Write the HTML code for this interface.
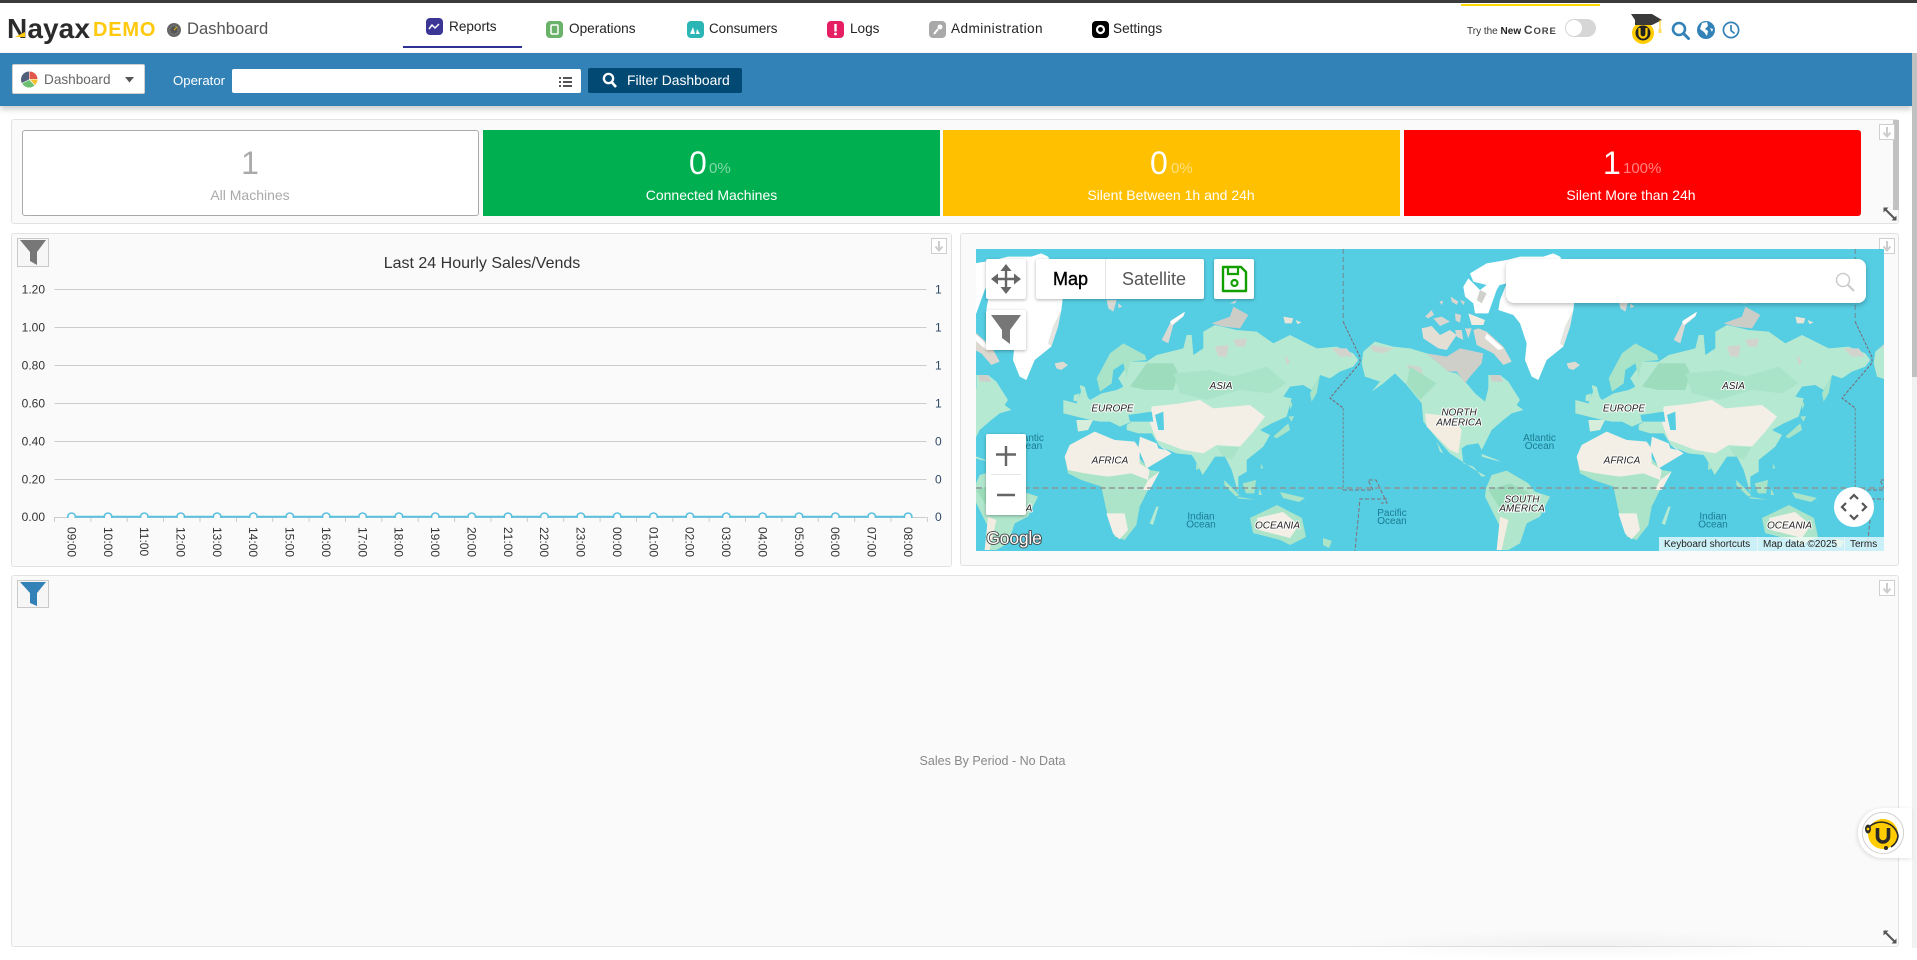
<!DOCTYPE html>
<html lang="en"><head><meta charset="utf-8"><title>Dashboard</title>
<style>
*{box-sizing:border-box}
html,body{margin:0;padding:0;width:1917px;height:948px;overflow:hidden;background:#fff;font-family:"Liberation Sans",sans-serif}
.a{position:absolute}
.t{position:absolute;white-space:nowrap;line-height:1}
.c{transform:translateX(-50%)}
.nav{font-size:13.6px;color:#222}
.panel{position:absolute;background:#fafafa;border:1px solid #e2e2e2;border-radius:3px}
.card{position:absolute;top:130px;height:86px}
.num{font-size:32px;line-height:1;top:147px;position:absolute;white-space:nowrap}
.pc{font-size:15px;line-height:1;top:161px;position:absolute;white-space:nowrap;opacity:.5}
.lab{font-size:14px;line-height:1;top:188px;position:absolute;white-space:nowrap;transform:translateX(-50%)}
.dl{position:absolute;width:16px;height:16px;background:#fff;border:1px solid #cfcfcf}
.ctl{position:absolute;background:#fff;border-radius:2px;box-shadow:0 1px 3px rgba(0,0,0,.3)}
svg{display:block;position:absolute;overflow:hidden}
</style></head><body>

<div class="a" style="left:0;top:0;width:1917px;height:3px;background:#3b3b3b"></div>
<div class="a" style="left:1461px;top:4px;width:139px;height:2px;background:#ffd800"></div>

<!-- logo -->
<div class="t" style="left:7px;top:15px;font-size:28px;font-weight:bold;color:#2b2b2b;letter-spacing:.1px">Nayax</div>
<div class="t" style="left:93px;top:20px;font-size:20px;font-weight:bold;color:#ffc90e;letter-spacing:.8px">DEMO</div>
<svg style="left:10px;top:30px" width="18" height="8"><polygon points="5,7 15,2 15,7" fill="#ffc90e"/></svg>
<svg style="left:166px;top:22px" width="16" height="16" viewBox="0 0 16 16"><circle cx="8" cy="8" r="7" fill="#666"/><circle cx="8" cy="8" r="4" fill="#555" stroke="#888" stroke-width="1" stroke-dasharray="1 1"/><path d="M8 8L11 5" stroke="#e5b400" stroke-width="1"/></svg>
<div class="t" style="left:187px;top:21px;font-size:16.6px;color:#555">Dashboard</div>

<!-- nav -->
<svg style="left:426px;top:18px" width="17" height="17" viewBox="0 0 17 17"><rect width="17" height="17" rx="4" fill="#3b3696"/><path d="M3 11L6 7L9 10L13 6" stroke="#fff" stroke-width="1.5" fill="none"/></svg>
<div class="t nav" style="left:449px;top:20px">Reports</div>
<div class="a" style="left:403px;top:46px;width:119px;height:2px;background:#2e3192"></div>

<svg style="left:546px;top:21px" width="17" height="17" viewBox="0 0 17 17"><rect width="17" height="17" rx="4" fill="#6ab26a"/><rect x="5" y="4" width="7" height="9" rx="1" fill="none" stroke="#fff" stroke-width="1.5"/></svg>
<div class="t nav" style="left:569px;top:22px">Operations</div>

<svg style="left:687px;top:21px" width="17" height="17" viewBox="0 0 17 17"><rect width="17" height="17" rx="4" fill="#2bb5b5"/><path d="M3 13L6 6L8 13ZM9 13L10 8L13 13Z" fill="#fff"/></svg>
<div class="t nav" style="left:709px;top:22px;font-size:13.4px">Consumers</div>

<svg style="left:827px;top:21px" width="17" height="17" viewBox="0 0 17 17"><rect width="17" height="17" rx="4" fill="#e61e64"/><rect x="7.3" y="3" width="2.4" height="7.5" fill="#fff"/><circle cx="8.5" cy="13" r="1.4" fill="#fff"/></svg>
<div class="t nav" style="left:850px;top:22px">Logs</div>

<svg style="left:929px;top:21px" width="17" height="17" viewBox="0 0 17 17"><rect width="17" height="17" rx="4" fill="#a9a9a9"/><path d="M5 13L9 8" stroke="#fff" stroke-width="2"/><circle cx="11" cy="6" r="2.5" fill="#fff"/></svg>
<div class="t nav" style="left:951px;top:22px;letter-spacing:.42px">Administration</div>

<svg style="left:1092px;top:21px" width="17" height="17" viewBox="0 0 17 17"><rect width="17" height="17" rx="4" fill="#000"/><circle cx="8.5" cy="8.5" r="3.5" fill="none" stroke="#fff" stroke-width="2.2"/></svg>
<div class="t nav" style="left:1113px;top:22px">Settings</div>

<div class="t" style="left:1467px;top:24px;font-size:10px;color:#333">Try the <b style="color:#222">New</b> <b style="color:#444;font-size:12px;letter-spacing:.9px">C<span style="font-size:9.5px">ORE</span></b></div>
<div class="a" style="left:1565px;top:19px;width:31px;height:18px;background:#d6d6d6;border-radius:9px"></div>
<div class="a" style="left:1566px;top:20px;width:16px;height:16px;background:#fff;border-radius:50%"></div>

<!-- cap -->
<svg style="left:1628px;top:12px" width="38" height="34" viewBox="0 0 38 34"><circle cx="15" cy="21" r="11" fill="#ffcc00"/><circle cx="15" cy="21" r="7.5" fill="#222"/><path d="M11.5 16v6a3.5 3.5 0 007 0v-6" fill="none" stroke="#ffcc00" stroke-width="2.2"/><path d="M3 2L24 2L34 8L24 13H7L7 8Z" fill="#3a3a3a"/><path d="M32 8V19" stroke="#ffcc00" stroke-width="1"/><rect x="30.5" y="17" width="3" height="4" fill="#ffdf60"/></svg>
<svg style="left:1671px;top:21px" width="19" height="19" viewBox="0 0 19 19"><circle cx="8" cy="8" r="6" fill="none" stroke="#3282b8" stroke-width="2.6"/><path d="M12.5 12.5L17.5 17.5" stroke="#3282b8" stroke-width="3" stroke-linecap="round"/></svg>
<svg style="left:1696px;top:20px" width="20" height="20" viewBox="0 0 20 20"><circle cx="10" cy="10" r="9" fill="#3282b8"/><path d="M6 3L11 2L12 6L9 9L12 11L11 16L8 12L4 9Z" fill="#fff"/><path d="M14 8l3 1-1 3z" fill="#fff"/></svg>
<svg style="left:1722px;top:21px" width="18" height="18" viewBox="0 0 18 18"><circle cx="9" cy="9" r="7.6" fill="#fff" stroke="#3282b8" stroke-width="1.7"/><path d="M9 4V9.5L12.5 12.5" fill="none" stroke="#3282b8" stroke-width="1.7"/></svg>

<!-- blue bar -->
<div class="a" style="left:0;top:53px;width:1912px;height:53px;background:#3282b8;box-shadow:0 3px 6px rgba(0,0,0,.22)"></div>
<div class="a" style="left:12px;top:64px;width:133px;height:30px;background:#fff;border:1px solid #d0d0d0;border-radius:2px"></div>
<svg style="left:21px;top:71px" width="17" height="17" viewBox="0 0 17 17"><path d="M8 8.5V0.5A8 8 0 000.8 12Z" fill="#51607a"/><path d="M8.5 8V0.5A8 8 0 0116.5 8Z" fill="#e2574c"/><path d="M9 8.5H16.5A8 8 0 0114 14Z" fill="#f3c02f"/><path d="M8.3 9L13.5 14.5A8 8 0 011.2 12.5Z" fill="#6cc070"/></svg>
<div class="t" style="left:44px;top:73px;font-size:13.6px;color:#666">Dashboard</div>
<svg style="left:125px;top:77px" width="9" height="6"><polygon points="0,0 9,0 4.5,5.5" fill="#555"/></svg>
<div class="t" style="left:173px;top:74px;font-size:13.2px;color:#fff">Operator</div>
<div class="a" style="left:232px;top:69px;width:349px;height:24px;background:#fff;border-radius:2px"></div>
<svg style="left:559px;top:76px" width="13" height="12" viewBox="0 0 13 12"><g fill="#555"><rect x="0" y="1" width="2" height="2"/><rect x="4" y="1" width="9" height="2"/><rect x="0" y="5" width="2" height="2"/><rect x="4" y="5" width="9" height="2"/><rect x="0" y="9" width="2" height="2"/><rect x="4" y="9" width="9" height="2"/></g></svg>
<div class="a" style="left:588px;top:68px;width:154px;height:25px;background:#024a73;border-radius:2px"></div>
<svg style="left:602px;top:72px" width="15" height="16" viewBox="0 0 15 16"><circle cx="6.5" cy="6.5" r="4.6" fill="none" stroke="#fff" stroke-width="2.3"/><path d="M10 10.5L14 15" stroke="#fff" stroke-width="2.6"/></svg>
<div class="t" style="left:627px;top:74px;font-size:13.9px;color:#fff">Filter Dashboard</div>

<!-- page scrollbar -->
<div class="a" style="left:1912px;top:53px;width:5px;height:895px;background:#f1f1f1"></div>
<div class="a" style="left:1912px;top:53px;width:5px;height:324px;background:#c1c1c1"></div>

<!-- panel 1 -->
<div class="panel" style="left:11px;top:119px;width:1888px;height:105px"></div>
<div class="card" style="left:22px;width:457px;background:#fff;border:1px solid #aaa;border-radius:3px"></div>
<div class="card" style="left:483px;width:457px;background:#00b050"></div>
<div class="card" style="left:943px;width:457px;background:#ffc000"></div>
<div class="card" style="left:1404px;width:457px;background:#f00;border-radius:0 3px 3px 0"></div>
<div class="num c" style="left:250px;color:#aaa">1</div>
<div class="lab" style="left:250px;color:#aaa">All Machines</div>
<div class="num" style="left:689px;color:#fff">0</div><div class="pc" style="left:709px;color:#fff">0%</div>
<div class="lab" style="left:711.5px;color:#fff">Connected Machines</div>
<div class="num" style="left:1150px;color:#fff">0</div><div class="pc" style="left:1171px;color:#fff">0%</div>
<div class="lab" style="left:1171px;color:#fff">Silent Between 1h and 24h</div>
<div class="num" style="left:1603px;color:#fff">1</div><div class="pc" style="left:1623px;color:#fff">100%</div>
<div class="lab" style="left:1631px;color:#fff">Silent More than 24h</div>
<div class="a" style="left:1893px;top:120px;width:6px;height:90px;background:#c1c1c1"></div>
<div class="dl" style="left:1879px;top:124px"></div>
<svg style="left:1879px;top:124px" width="16" height="16" viewBox="0 0 16 16"><path d="M8 3V12M4.5 8.5L8 12.5L11.5 8.5" fill="none" stroke="#ccc" stroke-width="2"/></svg>
<svg style="left:1883px;top:207px" width="14" height="14" viewBox="0 0 14 14"><path d="M2 2L12 12" stroke="#555" stroke-width="2"/><path d="M0.5 0.5H5.5L0.5 5.5ZM13.5 13.5H8.5L13.5 8.5Z" fill="#555"/></svg>

<!-- panel 2 chart -->
<div class="panel" style="left:11px;top:233px;width:941px;height:334px"></div>
<div class="a" style="left:17px;top:238px;width:32px;height:29px;background:#f6f6f6;border:1px solid #c9c9c9"></div>
<svg style="left:17px;top:238px" width="32" height="29" viewBox="0 0 32 29"><path d="M3 2H29L20 14V27L13 23V14Z" fill="#777"/></svg>
<div class="dl" style="left:931px;top:238px"></div>
<svg style="left:931px;top:238px" width="16" height="16" viewBox="0 0 16 16"><path d="M8 3V12M4.5 8.5L8 12.5L11.5 8.5" fill="none" stroke="#ccc" stroke-width="2"/></svg>
<svg style="left:0;top:240px" width="960" height="330" viewBox="0 240 960 330" font-family="'Liberation Sans',sans-serif" font-size="12" fill="#333">
<text x="482" y="268" font-size="16" text-anchor="middle" fill="#333">Last 24 Hourly Sales/Vends</text>
<g stroke="#ccc" stroke-width="1"><path d="M54.5 289.5H926.5M54.5 327.5H926.5M54.5 365.5H926.5M54.5 403.5H926.5M54.5 441.5H926.5M54.5 479.5H926.5M54.5 517.5H926.5"/>
<path d="M54.5 517V522M90.9 517V522M127.2 517V522M163.6 517V522M200 517V522M236.4 517V522M272.7 517V522M309.1 517V522M345.5 517V522M381.8 517V522M418.2 517V522M454.6 517V522M491 517V522M527.3 517V522M563.7 517V522M600.1 517V522M636.4 517V522M672.8 517V522M709.2 517V522M745.5 517V522M781.9 517V522M818.3 517V522M854.7 517V522M891 517V522M927.4 517V522"/></g>
<g text-anchor="end"><text x="45" y="293.5">1.20</text><text x="45" y="331.5">1.00</text><text x="45" y="369.5">0.80</text><text x="45" y="407.5">0.60</text><text x="45" y="445.5">0.40</text><text x="45" y="483.5">0.20</text><text x="45" y="521">0.00</text></g>
<g fill="#2f4a66"><text x="935" y="293.5">1</text><text x="935" y="331.5">1</text><text x="935" y="369.5">1</text><text x="935" y="407.5">1</text><text x="935" y="445.5">0</text><text x="935" y="483.5">0</text><text x="935" y="521">0</text></g>
<clipPath id="cc"><rect x="50" y="500" width="880" height="18"/></clipPath>
<g clip-path="url(#cc)" fill="#fafafa" stroke="#5bc0de" stroke-width="1.6"><path d="M71.6 516.8H908.1" fill="none" stroke-width="2"/>
<circle cx="71.6" cy="516.8" r="3.8"/><circle cx="108" cy="516.8" r="3.8"/><circle cx="144.3" cy="516.8" r="3.8"/><circle cx="180.7" cy="516.8" r="3.8"/><circle cx="217.1" cy="516.8" r="3.8"/><circle cx="253.4" cy="516.8" r="3.8"/><circle cx="289.8" cy="516.8" r="3.8"/><circle cx="326.2" cy="516.8" r="3.8"/><circle cx="362.6" cy="516.8" r="3.8"/><circle cx="398.9" cy="516.8" r="3.8"/><circle cx="435.3" cy="516.8" r="3.8"/><circle cx="471.7" cy="516.8" r="3.8"/><circle cx="508" cy="516.8" r="3.8"/><circle cx="544.4" cy="516.8" r="3.8"/><circle cx="580.8" cy="516.8" r="3.8"/><circle cx="617.2" cy="516.8" r="3.8"/><circle cx="653.5" cy="516.8" r="3.8"/><circle cx="689.9" cy="516.8" r="3.8"/><circle cx="726.3" cy="516.8" r="3.8"/><circle cx="762.6" cy="516.8" r="3.8"/><circle cx="799" cy="516.8" r="3.8"/><circle cx="835.4" cy="516.8" r="3.8"/><circle cx="871.7" cy="516.8" r="3.8"/><circle cx="908.1" cy="516.8" r="3.8"/></g>
<g>
<text transform="translate(67.4,527) rotate(90)">09:00</text><text transform="translate(103.8,527) rotate(90)">10:00</text><text transform="translate(140.1,527) rotate(90)">11:00</text><text transform="translate(176.5,527) rotate(90)">12:00</text><text transform="translate(212.9,527) rotate(90)">13:00</text><text transform="translate(249.2,527) rotate(90)">14:00</text><text transform="translate(285.6,527) rotate(90)">15:00</text><text transform="translate(322,527) rotate(90)">16:00</text><text transform="translate(358.4,527) rotate(90)">17:00</text><text transform="translate(394.7,527) rotate(90)">18:00</text><text transform="translate(431.1,527) rotate(90)">19:00</text><text transform="translate(467.5,527) rotate(90)">20:00</text><text transform="translate(503.8,527) rotate(90)">21:00</text><text transform="translate(540.2,527) rotate(90)">22:00</text><text transform="translate(576.6,527) rotate(90)">23:00</text><text transform="translate(613,527) rotate(90)">00:00</text><text transform="translate(649.3,527) rotate(90)">01:00</text><text transform="translate(685.7,527) rotate(90)">02:00</text><text transform="translate(722.1,527) rotate(90)">03:00</text><text transform="translate(758.4,527) rotate(90)">04:00</text><text transform="translate(794.8,527) rotate(90)">05:00</text><text transform="translate(831.2,527) rotate(90)">06:00</text><text transform="translate(867.5,527) rotate(90)">07:00</text><text transform="translate(903.9,527) rotate(90)">08:00</text>
</g>
</svg>

<!-- panel 3 map -->
<div class="panel" style="left:960px;top:233px;width:939px;height:333px"></div>
<div class="dl" style="left:1879px;top:238px"></div>
<svg style="left:1879px;top:238px" width="16" height="16" viewBox="0 0 16 16"><path d="M8 3V12M4.5 8.5L8 12.5L11.5 8.5" fill="none" stroke="#ccc" stroke-width="2"/></svg>

<svg style="left:976px;top:249px" width="908" height="302" viewBox="976 249 908 302" font-family="'Liberation Sans',sans-serif" font-size="10" text-anchor="middle">
<rect x="976" y="249" width="908" height="302" fill="#55cde3"/>
<defs><g id="w">
<!-- Americas, Greenland, Africa: zoom B coords -->
<g transform="translate(1360 250) scale(.33333)">
<path d="M330 70L380 40L440 30L480 20L550 20L580 10L600 20L650 100L640 180L630 230L610 290L560 330L535 390L515 380L495 330L500 280L480 220L460 195L415 180L420 150L440 100L400 110L340 95Z" fill="#fff"/>
<path d="M640 180L630 230L610 290L600 280L615 230Z" fill="#e4e4e0"/>
<path d="M310 110L325 85L360 120L400 90L430 85L410 120L385 190L345 190L340 160L315 140Z" fill="#fff"/>
<path d="M360 120L380 130L365 160L350 150Z" fill="#d0d0cc"/>
<path d="M195 200L215 180L222 195L205 205ZM220 205L245 200L270 215L240 228ZM285 190L303 195L300 218L287 212ZM272 140L295 155L290 165L275 155ZM300 150L315 155L310 165ZM238 155L250 152L245 165Z" fill="#d8d6cf"/>
<path d="M325 190L375 210L370 225L335 225Z" fill="#f2ede0"/>
<path d="M185 235L215 228L240 255L270 240L290 255L260 300L235 295L190 265Z" fill="#e3dfd4"/>
<path d="M285 240L305 240L310 270L290 260ZM340 240L355 235L380 245L430 290L455 335L430 345L400 310L350 285ZM315 235L335 235L325 265Z" fill="#dcd8cf"/>
<path d="M380 250L430 295L415 300L375 265Z" fill="#fff"/>
<path d="M10 305L45 275L100 290L150 295L200 310L265 365L290 370L320 400L345 430L375 455L385 415L385 375L420 375L445 395L480 450L470 465L490 480L455 490L430 510L395 540L375 580L365 600L355 580L320 585L305 595L310 640L340 650L365 680L378 678L345 660L300 630L270 610L230 565L190 515L185 460L140 405L105 370L70 400L35 425L60 395L15 380L5 340Z" fill="#b6e9d2"/>
<path d="M200 310L260 320L300 295L370 310L365 340L330 380L315 400L290 365L265 365Z" fill="#cfcfca"/>
<path d="M30 285L100 295L70 310L40 305ZM140 345L180 350L190 370L150 365Z" fill="#cfd4cc"/>
<path d="M150 350L230 400L180 450L140 400Z" fill="#a3e0c2"/>
<path d="M390 375L420 375L430 395L395 395Z" fill="#cfcfca"/>
<path d="M195 490L280 500L305 540L295 610L270 600L230 560L200 530Z" fill="#f2ede0"/>
<path d="M230 575L250 610L240 605Z" fill="#b6e9d2"/>
<path d="M365 612L425 635L400 630L365 620Z" fill="#b6e9d2"/>
<path d="M620 340L645 335L660 345L640 360L625 355Z" fill="#dcdcd2"/>
<path d="M378 715L395 675L440 662L505 700L525 725L570 740L540 800L500 820L480 880L445 900L410 900L420 830L375 740Z" fill="#b0e6cc"/>
<path d="M385 720L450 700L510 730L480 770L430 790Z" fill="#9bdcbb"/>
<path d="M420 800L445 810L425 900L410 900Z" fill="#f2ede0"/>
<path d="M650 620L665 585L740 545L800 570L860 575L880 600L870 620L905 660L935 665L900 720L875 770L865 825L830 870L800 860L775 780L760 710L700 690L660 670Z" fill="#abe4c8"/>
<path d="M650 620L665 585L740 545L800 570L860 575L875 600L875 640L905 660L900 690L850 670L780 680L710 670L660 660Z" fill="#f3efe6"/>
<path d="M900 690L935 665L905 720L885 720Z" fill="#f3efe6"/>
<path d="M775 790L830 790L840 840L815 868L795 850Z" fill="#f3efe6"/>
<path d="M925 770L932 770L915 825L905 820Z" fill="#b6e9d2"/>
<path d="M695 405L710 410L720 445L705 455ZM678 435L695 430L690 455L676 452Z" fill="#b6e9d2"/>
<path d="M685 510L735 510L720 540L690 545Z" fill="#d8eedd"/>
</g>
<!-- Eurasia: zoom A coords -->
<g transform="translate(1090 290) scale(.33333)">
<path d="M-80 330L-40 340L-25 300L0 330L35 310L80 300L100 290L85 265L120 215L170 215L200 195L280 175L290 135L305 135L310 195L340 175L340 125L375 105L440 120L500 125L550 160L600 135L680 175L740 170L790 190L805 210L790 230L750 245L720 265L690 255L665 300L640 285L600 290L580 320L605 325L590 380L545 400L510 420L540 435L520 470L470 510L470 545L445 560L445 610L425 540L405 500L375 500L338 555L315 510L305 495L260 490L210 470L185 430L145 430L110 420L110 405L125 395L90 410L60 395L30 395L0 390L-40 380L-80 370Z" fill="#b6e9d2"/>
<path d="M20 265L60 190L100 160L165 195L170 210L120 215L110 265L100 220L70 240L65 280L30 305Z" fill="#a9e4c8"/>
<path d="M120 290L170 220L250 220L265 250L250 300L170 300Z" fill="#9ddcbd"/>
<path d="M250 250L360 240L430 260L530 230L590 280L540 310L450 300L350 330L270 310Z" fill="#a9e4c8"/>
<path d="M185 350L270 340L330 330L370 355L480 345L525 380L490 425L450 470L380 465L340 490L280 480L200 450L180 400Z" fill="#f3efe6"/>
<path d="M150 440L200 460L245 490L170 535L145 475Z" fill="#f3efe6"/>
<path d="M380 470L450 470L425 510L395 495Z" fill="#a9e4c8"/>
<path d="M365 100L420 80L430 50L475 75L450 115L400 110Z" fill="#cdcdc8"/>
<path d="M430 150L470 145L465 170L440 170ZM375 170L415 165L410 200L385 200ZM725 175L770 175L790 200L750 200ZM585 195L600 215L590 225Z" fill="#d3d3ce"/>
<path d="M215 150L245 90L285 65L280 80L250 105L235 160Z" fill="#d8d8d4"/>
<path d="M240 95L285 65L280 78L245 105Z" fill="#fff"/>
<path d="M580 80L610 85L605 100L585 100ZM617 90L635 98L622 102Z" fill="#e7e3d6"/>
<path d="M660 310L690 255L680 310L665 335Z" fill="#a9e4c8"/>
<path d="M550 440L595 400L600 420L560 445Z" fill="#a9e4c8"/>
<path d="M595 380L612 378L605 395Z" fill="#a9e4c8"/>
<path d="M600 325L607 345L600 360Z" fill="#a9e4c8"/>
<path d="M50 30L80 30L70 65L55 55ZM85 40L97 50L85 54Z" fill="#d8d8d4"/>
<path d="M420 40L440 30L435 40Z" fill="#ddd"/>
<path d="M115 375L185 365L190 395L120 395Z" fill="#55cde3"/>
<path d="M195 375L220 365L222 420L205 420Z" fill="#55cde3"/>
<path d="M200 460L225 480L205 475Z" fill="#55cde3"/>
</g>
<!-- Indonesia, Oceania -->
<g transform="translate(976 380) scale(.33333)">
<path d="M745 300L790 345L780 350L745 315ZM800 310L840 300L835 340L810 340ZM850 325L858 345L848 345ZM855 250L862 265L854 265ZM785 350L840 360L785 355ZM660 250L672 265L660 270Z" fill="#a9e4c8"/>
</g>
<path d="M1250 518L1277 505L1302 518L1306 537L1290 545L1280 540L1253 533Z" fill="#abe4c8"/>
<path d="M1257 518L1283 512L1299 525L1290 538L1259 530Z" fill="#f3efe6"/>
<path d="M1280 492L1305 498L1299 502L1283 498ZM1323 538L1332 541L1329 548L1323 545Z" fill="#abe4c8"/>
<!-- dashed boundaries -->
<path d="M1343.3 249V322" fill="none" stroke="#6f94a0" stroke-width="1.2" stroke-dasharray="5 3"/>
<path d="M1343.3 322L1360 357V363L1330 398L1343 408" fill="none" stroke="#7d6870" stroke-width="1" stroke-dasharray="3 1.5"/>
<path d="M1343.3 408V490" fill="none" stroke="#6f94a0" stroke-width="1.2" stroke-dasharray="3 1.5"/>
<path d="M1343 490H1373L1368 480H1376L1387 503H1381" fill="none" stroke="#84707a" stroke-width="1" stroke-dasharray="4 2"/>
<path d="M1387 499H1360L1355 551" fill="none" stroke="#84707a" stroke-width="1" stroke-dasharray="4 2"/>
</g></defs>
<use href="#w" transform="translate(-512 0)"/>
<use href="#w"/>
<use href="#w" transform="translate(512 0)"/>
<path d="M976 488H1884" stroke="#8f9496" stroke-width="1.6" stroke-dasharray="6 3.5"/>
<g font-style="italic" fill="#222" stroke="#fff" stroke-width="2" paint-order="stroke" stroke-linejoin="round">
<text x="1112.5" y="411.5">EUROPE</text><text x="1221" y="389">ASIA</text><text x="1110" y="463.5">AFRICA</text>
<text x="1459" y="415.5">NORTH</text><text x="1459" y="425.5">AMERICA</text>
<text x="1522" y="502.5">SOUTH</text><text x="1522" y="511.5">AMERICA</text>
<text x="1277.5" y="528.5">OCEANIA</text>
<text x="1624" y="411.5">EUROPE</text><text x="1733.5" y="389">ASIA</text><text x="1622" y="463.5">AFRICA</text><text x="1789.5" y="528.5">OCEANIA</text>
<text x="1029" y="511.5">A</text>
</g>
<g fill="#1b7d92">
<text x="1539.5" y="441">Atlantic</text><text x="1539.5" y="449">Ocean</text>
<text x="1201" y="519.5">Indian</text><text x="1201" y="527.5">Ocean</text>
<text x="1392" y="516">Pacific</text><text x="1392" y="524">Ocean</text>
<text x="1713" y="519.5">Indian</text><text x="1713" y="527.5">Ocean</text>
<text x="1027.5" y="441">Atlantic</text><text x="1027.5" y="449">Ocean</text>
</g>
<text x="1014" y="544" font-size="17.5" text-anchor="middle" fill="#fff" stroke="#444" stroke-width="1.8" paint-order="stroke" stroke-linejoin="round" letter-spacing="-.2">Google</text>
</svg>

<!-- map controls -->
<div class="ctl" style="left:986px;top:259px;width:40px;height:40px"></div>
<svg style="left:986px;top:259px" width="40" height="40" viewBox="0 0 40 40"><path d="M20 8V32M8 20H32" stroke="#666" stroke-width="2.4"/><path d="M20 5L25.5 12H14.5ZM20 35L25.5 28H14.5ZM5 20L12 14.5V25.5ZM35 20L28 14.5V25.5Z" fill="#666"/></svg>
<div class="ctl" style="left:1036px;top:259px;width:168px;height:40px"></div>
<div class="a" style="left:1105px;top:259px;width:1px;height:40px;background:#e6e6e6"></div>
<div class="t" style="left:1053px;top:270px;font-size:18px;color:#000;-webkit-text-stroke:.4px #000">Map</div>
<div class="t" style="left:1122px;top:270px;font-size:18px;color:#565656">Satellite</div>
<div class="ctl" style="left:1214px;top:259px;width:40px;height:40px"></div>
<svg style="left:1214px;top:259px" width="40" height="40" viewBox="0 0 40 40"><path d="M9 8H27L32 13V32H9Z" fill="none" stroke="#129f00" stroke-width="2.4" stroke-linejoin="round"/><path d="M14 8V15H24V8" fill="none" stroke="#129f00" stroke-width="2.2"/><circle cx="20.5" cy="24" r="3" fill="none" stroke="#129f00" stroke-width="2.2"/></svg>
<div class="ctl" style="left:986px;top:310px;width:40px;height:40px"></div>
<svg style="left:986px;top:310px" width="40" height="40" viewBox="0 0 40 40"><path d="M5 5H35L24 20V34L16 28V20Z" fill="#777"/></svg>
<div class="ctl" style="left:1506px;top:259px;width:360px;height:44px;border-radius:8px;box-shadow:0 2px 5px rgba(0,0,0,.25)"></div>
<svg style="left:1834px;top:271px" width="22" height="22" viewBox="0 0 22 22"><circle cx="9" cy="9" r="6.5" fill="none" stroke="#ccc" stroke-width="1.5"/><path d="M14 14L20 20" stroke="#ccc" stroke-width="2.2"/></svg>
<div class="ctl" style="left:986px;top:434px;width:40px;height:81px"></div>
<div class="a" style="left:991px;top:474px;width:30px;height:1px;background:#e6e6e6"></div>
<svg style="left:986px;top:434px" width="40" height="81" viewBox="0 0 40 81"><path d="M20 12V32M10 20.5H30" stroke="#666" stroke-width="2.4"/><path d="M11 61H29" stroke="#666" stroke-width="2.4"/></svg>
<svg style="left:1834px;top:487px" width="40" height="40" viewBox="0 0 40 40"><circle cx="20" cy="20" r="20" fill="#fff"/><path d="M16 12L20 8L24 12M16 28L20 32L24 28M12 16L8 20L12 24M28 16L32 20L28 24" fill="none" stroke="#555" stroke-width="2.2"/></svg>
<div class="a" style="left:1659px;top:537px;width:225px;height:14px;background:rgba(255,255,255,.7)"></div>
<div class="a" style="left:1757px;top:537px;width:1px;height:14px;background:#e8f6f9"></div>
<div class="a" style="left:1844px;top:537px;width:1px;height:14px;background:#e8f6f9"></div>
<div class="t" style="left:1664px;top:540px;font-size:10px;color:#222">Keyboard shortcuts</div>
<div class="t" style="left:1763px;top:540px;font-size:10px;color:#222">Map data ©2025</div>
<div class="t" style="left:1850px;top:540px;font-size:10px;color:#222">Terms</div>

<!-- panel 4 -->
<div class="panel" style="left:11px;top:575px;width:1888px;height:372px"></div>
<div class="a" style="left:1340px;top:930px;width:480px;height:30px;border-radius:50%;background:radial-gradient(closest-side,rgba(0,0,0,.035),rgba(0,0,0,0))"></div>
<div class="a" style="left:17px;top:580px;width:32px;height:28px;background:#f6f6f6;border:1px solid #c9c9c9"></div>
<svg style="left:17px;top:580px" width="32" height="28" viewBox="0 0 32 28"><path d="M3 2H29L20 13V26L13 23V13Z" fill="#3282b8"/></svg>
<div class="dl" style="left:1879px;top:580px"></div>
<svg style="left:1879px;top:580px" width="16" height="16" viewBox="0 0 16 16"><path d="M8 3V12M4.5 8.5L8 12.5L11.5 8.5" fill="none" stroke="#ccc" stroke-width="2"/></svg>
<div class="t c" style="left:992.5px;top:755px;font-size:12.5px;color:#888">Sales By Period - No Data</div>
<svg style="left:1883px;top:930px" width="14" height="14" viewBox="0 0 14 14"><path d="M2 2L12 12" stroke="#555" stroke-width="2"/><path d="M0.5 0.5H5.5L0.5 5.5ZM13.5 13.5H8.5L13.5 8.5Z" fill="#555"/></svg>

<!-- help widget -->
<div class="a" style="left:1858px;top:808px;width:54px;height:50px;background:#fff;border-radius:25px 0 0 25px;box-shadow:-1px 1px 4px rgba(0,0,0,.12)"></div>
<svg style="left:1861px;top:811px" width="44" height="44" viewBox="0 0 44 44"><circle cx="22" cy="22" r="20.6" fill="#fff" stroke="#d0d0d0" stroke-width="1"/><circle cx="22" cy="23" r="15" fill="#ffcc00"/><path d="M16.5 17V25.5a5.5 5.5 0 0011 0V17" fill="none" stroke="#2a2a2a" stroke-width="3.6"/><path d="M7 17A17 16 0 0137 25A16 15 0 0130 36" fill="none" stroke="#2a2a2a" stroke-width="1.6"/><ellipse cx="7" cy="18" rx="3" ry="4.5" fill="#2a2a2a"/><circle cx="7" cy="18" r="1.4" fill="#ffcc00"/><circle cx="25" cy="37" r="2" fill="#2a2a2a"/></svg>

</body></html>
